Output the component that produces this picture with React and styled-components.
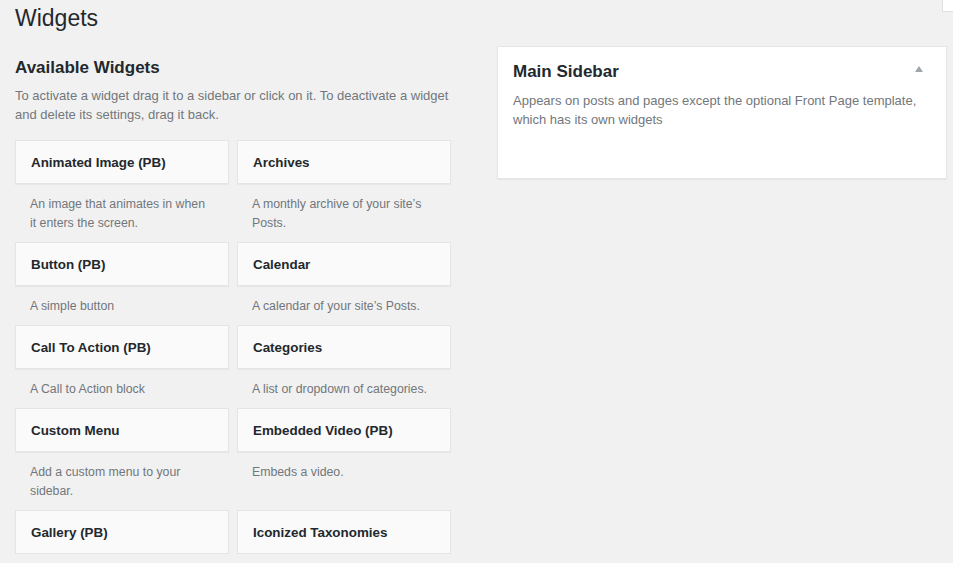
import React from 'react';
import styled, { createGlobalStyle } from 'styled-components';

const widgets = [
  { name: 'Animated Image (PB)', desc: 'An image that animates in when it enters the screen.' },
  { name: 'Archives', desc: "A monthly archive of your site\u2019s Posts." },
  { name: 'Button (PB)', desc: 'A simple button' },
  { name: 'Calendar', desc: "A calendar of your site\u2019s Posts." },
  { name: 'Call To Action (PB)', desc: 'A Call to Action block' },
  { name: 'Categories', desc: 'A list or dropdown of categories.' },
  { name: 'Custom Menu', desc: 'Add a custom menu to your sidebar.' },
  { name: 'Embedded Video (PB)', desc: 'Embeds a video.' },
  { name: 'Gallery (PB)' },
  { name: 'Iconized Taxonomies' },
];

function App() {
  return (
    <>
      <GlobalStyle />
      <ScreenTab />
      <Wrap>
        <PageTitle>Widgets</PageTitle>
        <Columns>
          <LeftCol>
            <SectionTitle>Available Widgets</SectionTitle>
            <Intro>
              To activate a widget drag it to a sidebar or click on it. To deactivate a widget
              and delete its settings, drag it back.
            </Intro>
            <WidgetGrid>
              {widgets.map((w) => (
                <WidgetItem key={w.name}>
                  <WidgetCard>{w.name}</WidgetCard>
                  {w.desc && <WidgetDesc>{w.desc}</WidgetDesc>}
                </WidgetItem>
              ))}
            </WidgetGrid>
          </LeftCol>

          <SidebarPanel>
            <PanelHead>
              <PanelTitle>Main Sidebar</PanelTitle>
              <Arrow />
            </PanelHead>
            <PanelDesc>
              Appears on posts and pages except the optional Front Page template, which has its own widgets
            </PanelDesc>
          </SidebarPanel>
        </Columns>
      </Wrap>
    </>
  );
}

const GlobalStyle = createGlobalStyle`
  html, body {
    margin: 0;
    padding: 0;
    overflow: hidden;
    background: #f1f1f1;
    font-family: "Liberation Sans", Arial, sans-serif;
    color: #23282d;
  }
`
const ScreenTab = styled.div`
  position: absolute;
  top: 0;
  right: 0;
  width: 10px;
  height: 11px;
  background: #fff;
  border-left: 1px solid #e1e1e1;
  border-bottom: 1px solid #e1e1e1;
`
const Wrap = styled.div`
  padding: 0 0 0 15px;
`
const PageTitle = styled.h1`
  margin: 0;
  padding-top: 4px;
  font-size: 23px;
  line-height: 29px;
  font-weight: 400;
  color: #23282d;
`
const Columns = styled.div`
  display: flex;
  align-items: flex-start;
  gap: 46px;
`
const LeftCol = styled.div`
  width: 436px;
  flex-shrink: 0;
`
const SectionTitle = styled.h2`
  margin: 23px 0 0;
  font-size: 17px;
  line-height: 23px;
  font-weight: 700;
`
const Intro = styled.p`
  margin: 7px 0 0;
  font-size: 13px;
  line-height: 19px;
  color: #72777c;
`
const WidgetGrid = styled.div`
  display: grid;
  grid-template-columns: 214px 214px;
  column-gap: 8px;
  margin-top: 16px;
`
const WidgetItem = styled.div`
  display: flex;
  flex-direction: column;
`
const WidgetCard = styled.div`
  box-sizing: border-box;
  height: 44px;
  display: flex;
  align-items: center;
  padding: 0 15px;
  background: #fafafa;
  border: 1px solid #e5e5e5;
  box-shadow: 0 1px 1px rgba(0, 0, 0, 0.04);
  font-size: 13.4px;
  font-weight: 700;
  color: #23282d;
`
const WidgetDesc = styled.div`
  padding: 11px 15px 9px;
  font-size: 12.3px;
  line-height: 19px;
  color: #72777c;
`
const SidebarPanel = styled.div`
  box-sizing: border-box;
  width: 450px;
  margin-top: 13px;
  padding: 0 15px 49px;
  background: #fff;
  border: 1px solid #e5e5e5;
  box-shadow: 0 1px 1px rgba(0, 0, 0, 0.04);
`
const PanelHead = styled.div`
  display: flex;
  justify-content: space-between;
  align-items: flex-start;
  padding-top: 13px;
`
const PanelTitle = styled.h2`
  margin: 0;
  font-size: 17px;
  line-height: 23px;
  font-weight: 700;
`
const Arrow = styled.span`
  width: 0;
  height: 0;
  margin: 6px 8px 0 0;
  border-left: 4.5px solid transparent;
  border-right: 4.5px solid transparent;
  border-bottom: 6px solid #a0a5aa;
`
const PanelDesc = styled.p`
  margin: 8px 0 0;
  font-size: 13px;
  line-height: 19px;
  color: #72777c;
`

export default App;
